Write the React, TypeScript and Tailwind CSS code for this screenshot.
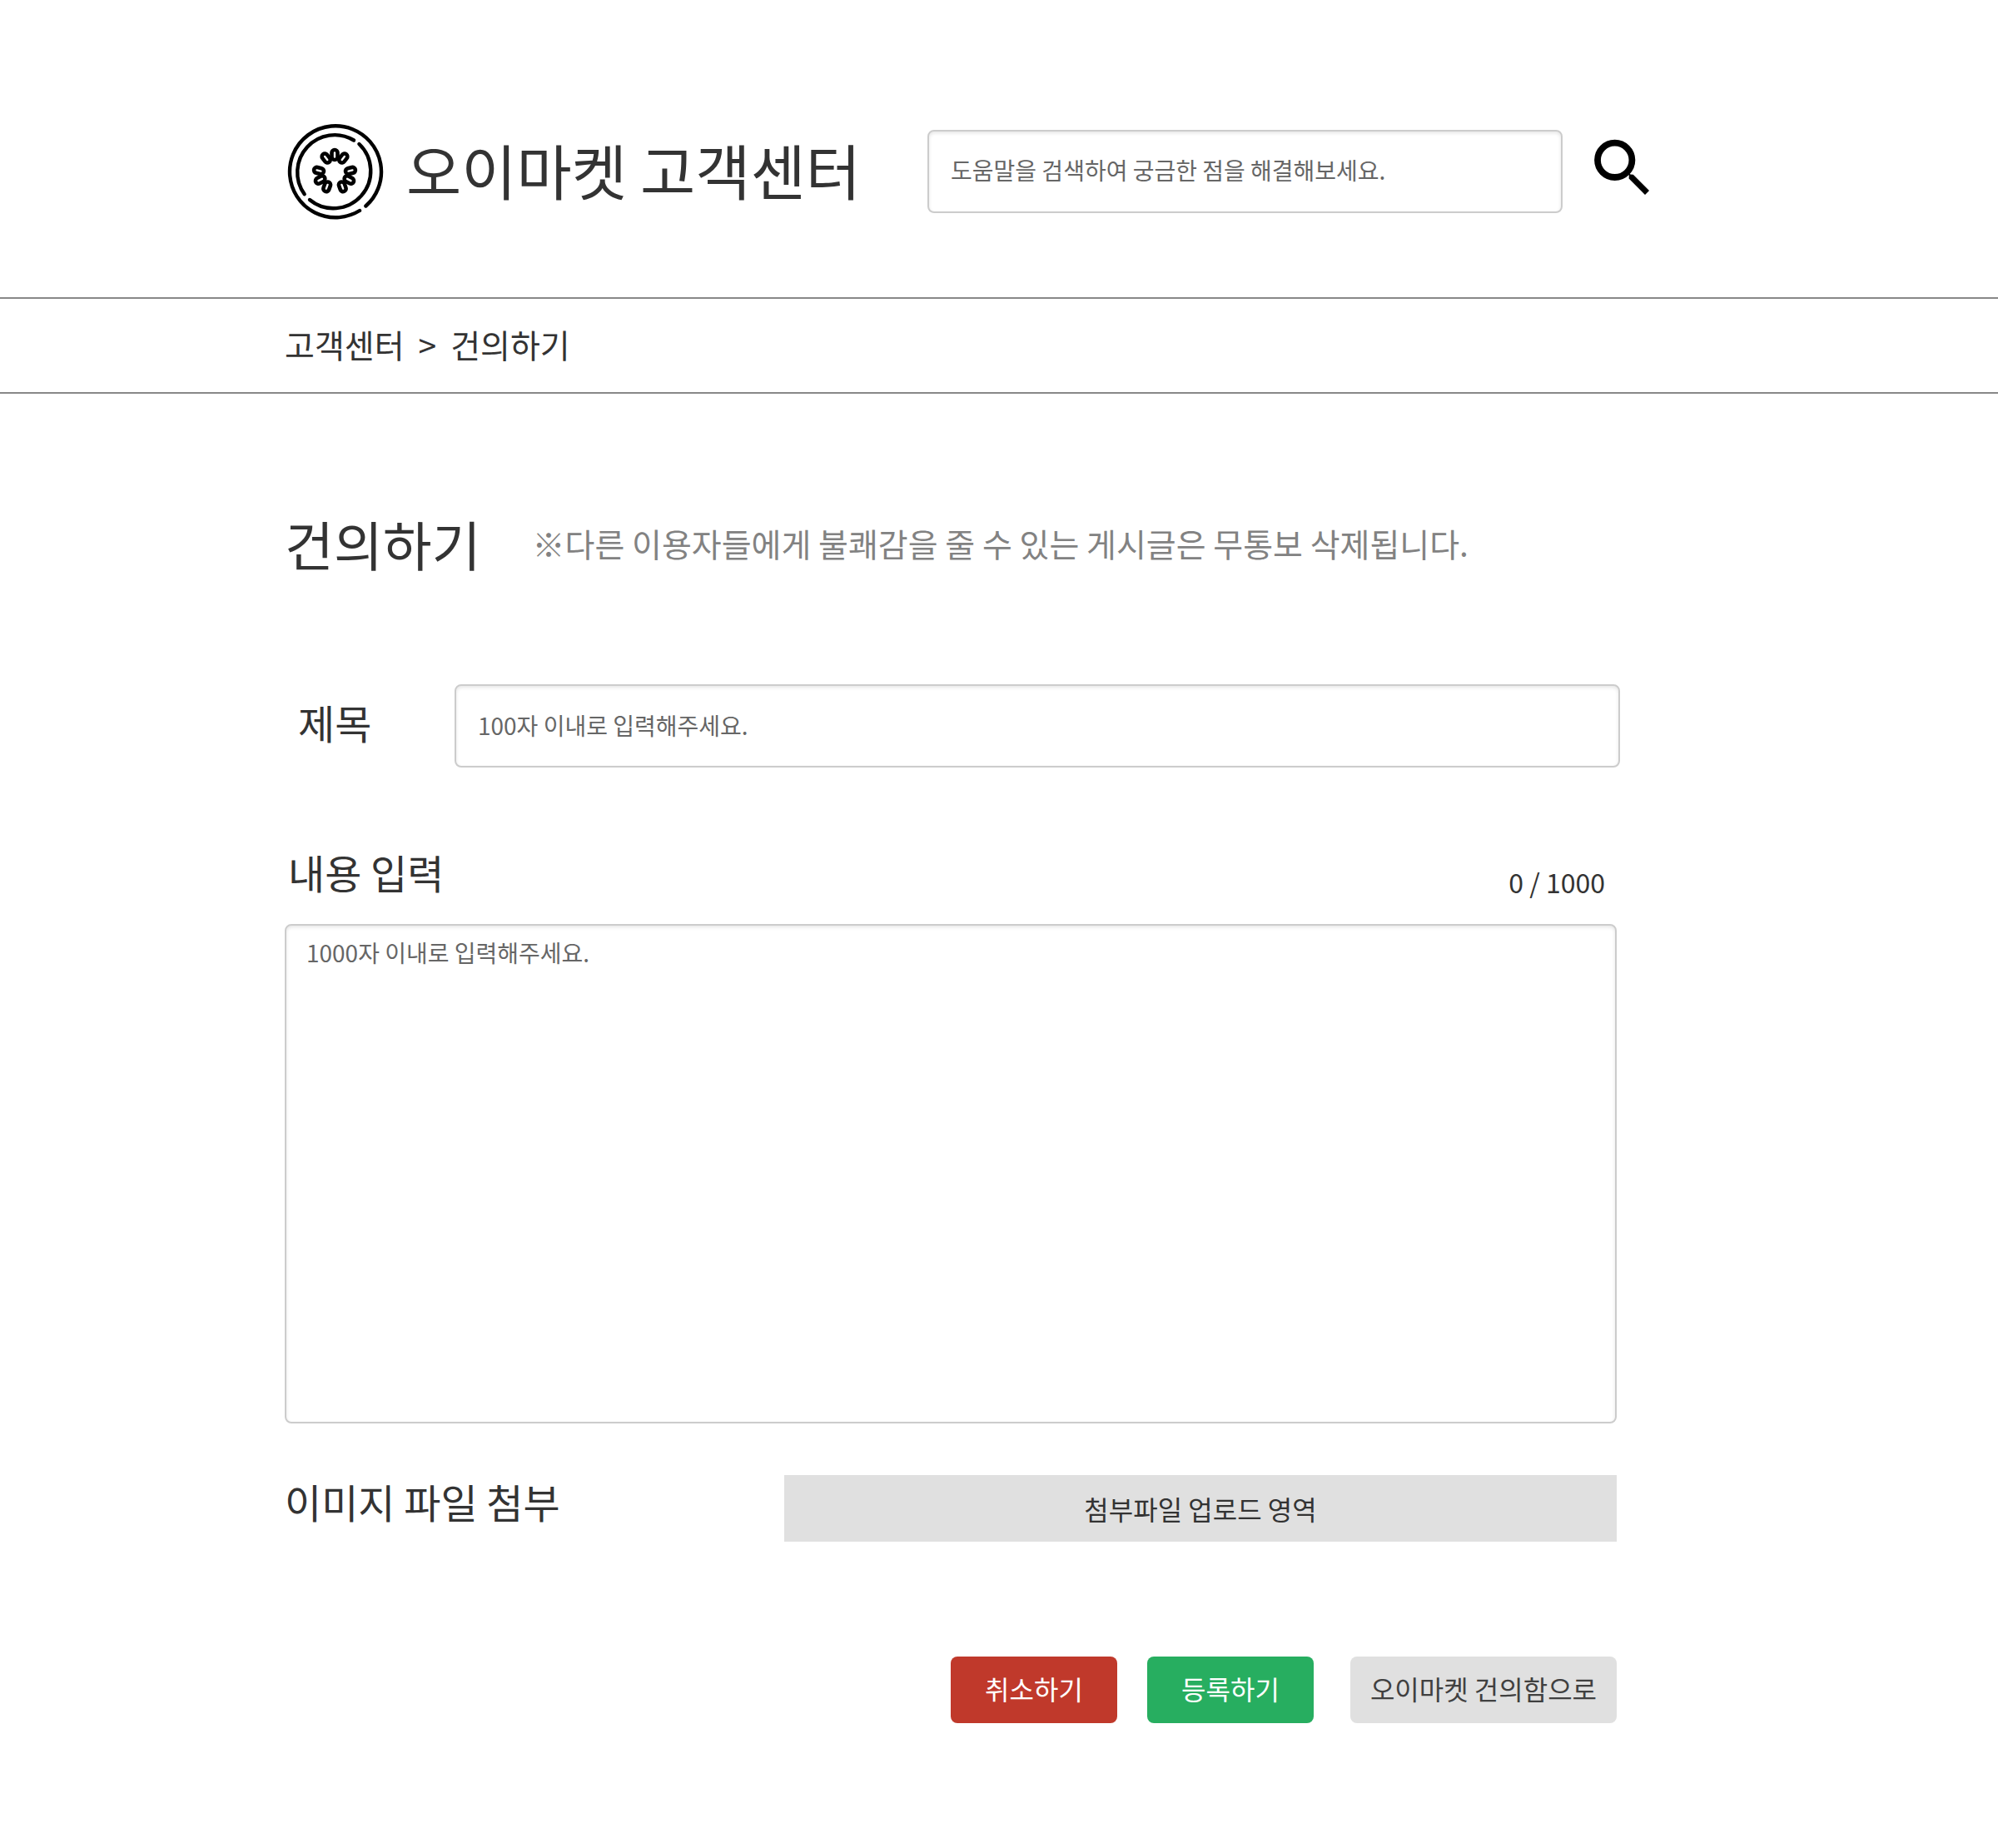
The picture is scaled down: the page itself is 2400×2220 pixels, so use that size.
const field =
  "rounded-lg border-2 border-[#cccccc] bg-white text-[28px] text-[#333333] shadow-[inset_0_2px_4px_rgba(0,0,0,0.1)] outline-none placeholder:text-[#666666]";

const seeds = [
  { x: 0, y: -21, angle: 0 },
  { x: -10.3, y: -17, angle: -38 },
  { x: 10.3, y: -17, angle: 38 },
  { x: -19, y: -2, angle: -76 },
  { x: 19, y: -2, angle: 76 },
  { x: -17.3, y: 9, angle: -118 },
  { x: 17.3, y: 9, angle: 118 },
  { x: -9.3, y: 17.3, angle: -160 },
  { x: 9.3, y: 17.3, angle: 160 },
];

function Logo() {
  return (
    <svg viewBox="-60 -60 120 120" className="size-[120px] shrink-0" fill="none" stroke="#000" strokeWidth="4.4" strokeLinecap="round" aria-hidden="true">
      <path d="M30 46A55 55 0 1 1 37.4 40.5" />
      <path d="M23 -38.5A44.8 44.8 0 0 0 -36.3 26.2" />
      <path d="M29.4 -34A44.8 44.8 0 0 1 -30 33" />
      {seeds.map((s) => (
        <rect key={`${s.x},${s.y}`} x="-3.5" y="-6" width="7" height="12" rx="3.5" strokeWidth="4.6" transform={`translate(${s.x} ${s.y}) rotate(${s.angle})`} />
      ))}
    </svg>
  );
}

function SearchIcon() {
  return (
    <svg viewBox="0 0 72 72" className="size-[72px]" aria-hidden="true">
      <circle cx="27.7" cy="28.3" r="20.7" fill="none" stroke="#000" strokeWidth="7.8" />
      <path d="M42.5 44L44.8 46.500L44.600 50.600L64 70L69 65L49.800 45.700L46.500 45.500L44 43z" fill="#000" />
    </svg>
  );
}

export default function App() {
  return (
    <div className="min-h-screen bg-white font-['Noto_Sans_CJK_KR',sans-serif] text-[#333333]">
      <header className="flex h-[357px] items-center pt-[57px] pr-[416px] pl-[342px]">
        <a href="#" className="flex shrink-0 items-center gap-[26px]">
          <Logo />
          <span className="pb-2 text-[72px] leading-none">오이마켓 고객센터</span>
        </a>
        <form className="ml-20 flex flex-1 items-center gap-[35px] pb-[3px]">
          <input aria-label="도움말 검색" placeholder="도움말을 검색하여 궁금한 점을 해결해보세요." className={`${field} h-[100px] min-w-0 flex-1 px-[26px] pb-[3px]`} />
          <button type="button" aria-label="검색" className="shrink-0 pb-3">
            <SearchIcon />
          </button>
        </form>
      </header>

      <nav aria-label="현재 위치" className="flex h-[116px] items-center gap-[17px] border-y-2 border-[#888888] pr-[458px] pb-1 pl-[342px] text-[39px] leading-none">
        <a href="#">고객센터</a>
        <span>&gt;</span>
        <a href="#">건의하기</a>
      </nav>

      <main className="pt-[134px] pr-[458px] pb-[150px] pl-[342px]">
        <div className="flex h-[90px] items-center gap-[62px]">
          <h1 className="text-[64px] leading-none">건의하기</h1>
          <p className="text-[39px] leading-none text-[#828282]">※다른 이용자들에게 불쾌감을 줄 수 있는 게시글은 무통보 삭제됩니다.</p>
        </div>

        <form>
          <div className="mt-[125px] -mr-1 flex items-center">
            <label htmlFor="title" className="w-[204px] pb-2.5 pl-4 text-[48px] leading-none">제목</label>
            <input id="title" placeholder="100자 이내로 입력해주세요." className={`${field} h-[100px] min-w-0 flex-1 px-[26px] pb-[3px]`} />
          </div>

          <div className="mt-[93px] flex items-end justify-between pr-3.5 pl-1">
            <label htmlFor="content" className="text-[48px] leading-[64px]">내용 입력</label>
            <span className="text-[32px] leading-10">0 / 1000</span>
          </div>
          <textarea id="content" placeholder="1000자 이내로 입력해주세요." className={`${field} mt-[31px] block h-[600px] w-full resize-none px-6 py-[11px]`} />

          <div className="mt-[62px] flex items-center">
            <span id="attach" className="w-[600px] shrink-0 pb-[18px] text-[48px] leading-none">이미지 파일 첨부</span>
            <button type="button" aria-describedby="attach" className="h-20 flex-1 bg-[#e0e0e0] text-[32px] leading-none">첨부파일 업로드 영역</button>
          </div>

          <div className="mt-[138px] flex justify-end text-[32px] leading-none">
            <button type="button" className="h-20 w-[200px] rounded-lg bg-[#c0392b] pb-1 text-white">취소하기</button>
            <button type="button" className="ml-9 h-20 w-[200px] rounded-lg bg-[#27ae60] pb-1 text-white">등록하기</button>
            <button type="button" className="ml-11 h-20 w-[320px] rounded-lg bg-[#e0e0e0] pb-1 text-[#404040]">오이마켓 건의함으로</button>
          </div>
        </form>
      </main>
    </div>
  );
}
